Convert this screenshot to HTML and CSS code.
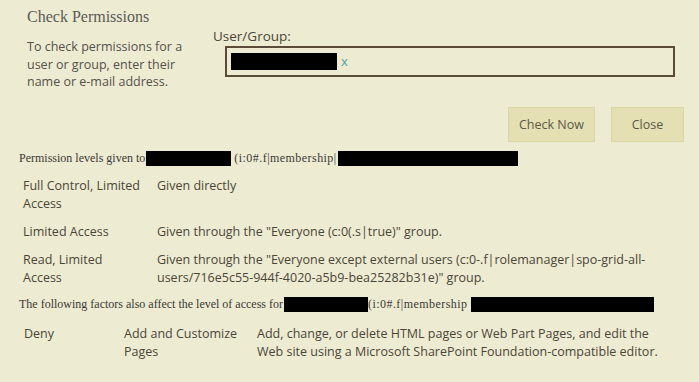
FILE: index.html
```html
<!DOCTYPE html>
<html>
<head>
<meta charset="utf-8">
<title>Check Permissions</title>
<link rel="stylesheet" href="styles.css">
</head>
<body>
<div class="dialog">
  <div class="top">
    <div class="intro">
      <h2 class="title">Check Permissions</h2>
      <p class="desc">To check permissions for a user or group, enter their name or e-mail address.</p>
    </div>
    <div class="picker">
      <div class="picker-label">User/Group:</div>
      <div class="picker-box">
        <span class="redact redact-user"></span><span class="remove">x</span>
      </div>
    </div>
  </div>

  <div class="actions">
    <button class="button btn-check">Check Now</button>
    <button class="button btn-close">Close</button>
  </div>

  <p class="note">Permission levels given to<span class="redact r-name1"></span> <span class="claim">(i:0#.f|membership|</span><span class="redact r-login1"></span></p>

  <table class="grid levels">
    <tr>
      <td class="c-level">Full Control, Limited Access</td>
      <td class="c-how">Given directly</td>
    </tr>
    <tr>
      <td class="c-level">Limited Access</td>
      <td class="c-how">Given through the "Everyone (c:0(.s|true)" group.</td>
    </tr>
    <tr>
      <td class="c-level">Read, Limited Access</td>
      <td class="c-how">Given through the "Everyone except external users (c:0-.f|rolemanager|spo-grid-all-users/716e5c55-944f-4020-a5b9-bea25282b31e)" group.</td>
    </tr>
  </table>

  <p class="note note2">The following factors also affect the level of access for<span class="redact r-name2"></span><span class="claim">(i:0#.f|membership</span> <span class="redact r-login2"></span></p>

  <table class="grid factors">
    <tr>
      <td class="c-deny">Deny</td>
      <td class="c-perm">Add and Customize Pages</td>
      <td class="c-desc">Add, change, or delete HTML pages or Web Part Pages, and edit the<br>Web site using a Microsoft SharePoint Foundation-compatible editor.</td>
    </tr>
  </table>
</div>
</body>
</html>
```

FILE: styles.css
```css
body {
  margin: 0;
  background: #eeebd3;
  color: #4a4637;
  font-family: "Open Sans", "Noto Sans", sans-serif;
}

.dialog {
  padding: 8px 15px 0 18px;
}

/* top part: intro text + people picker */
.top {
  display: flex;
}

.intro {
  width: 186px;
  padding-left: 9px;
}

.title {
  margin: 0;
  font-family: "Liberation Serif", serif;
  font-weight: normal;
  font-size: 16px;
  line-height: 18px;
  color: #5a5a55;
}

.desc {
  width: 162px;
  margin: 12px 0 0 0;
  font-size: 12.5px;
  line-height: 17.5px;
  color: #55514a;
}

.picker {
  flex: 1;
  padding-top: 18px;
}

.picker-label {
  font-size: 13.5px;
  line-height: 20px;
  color: #4a4637;
}

.picker-box {
  margin: 0 9px 0 12px;
  height: 27px;
  border: 2px solid #5b4c3a;
  display: flex;
  align-items: center;
  padding-left: 4px;
}

.remove {
  color: #4aa0a6;
  font-size: 13px;
  margin-left: 4px;
  line-height: 13px;
}

.redact {
  display: inline-block;
  background: #000;
  vertical-align: middle;
}

.redact-user { width: 106px; height: 17px; }

/* buttons */
.actions {
  display: flex;
  justify-content: flex-end;
  gap: 16px;
  margin-top: 16px;
}

.button {
  font-family: "Open Sans", "Noto Sans", sans-serif;
  font-size: 12.5px;
  color: #5b5846;
  background: #e5e0b3;
  border: 1px solid #dad5a5;
  height: 35px;
  padding: 0;
  cursor: pointer;
}

.btn-check { width: 87px; }
.btn-close { width: 73px; }

/* small slab headings */
.note {
  margin: 8px 0 0 1px;
  font-family: "Liberation Serif", serif;
  font-size: 12px;
  line-height: 16px;
  color: #3b3a33;
  white-space: nowrap;
}

.claim { letter-spacing: 0.45px; }

.note .redact { height: 15px; vertical-align: -4px; }
.r-name1 { width: 85px; margin-left: 1px; }
.r-login1 { width: 180px; margin-left: 1px; }
.r-name2 { width: 84px; margin-left: 1px; }
.r-login2 { width: 183px; margin-left: 1px; }

.note2 { margin-top: 4px; }

/* permission tables */
.grid {
  border-collapse: collapse;
  font-size: 12.5px;
  line-height: 18px;
  color: #4a4637;
}

.grid td {
  padding: 5px 0;
  vertical-align: top;
}

.levels { margin-top: 6px; margin-left: 5px; }
.c-level { width: 118px; padding-right: 16px !important; }
.c-how { width: 500px; }

.factors { margin-top: 8px; margin-left: 6px; }
.c-deny { width: 100px; }
.c-perm { width: 133px; }
.c-desc { width: 420px; }
```
